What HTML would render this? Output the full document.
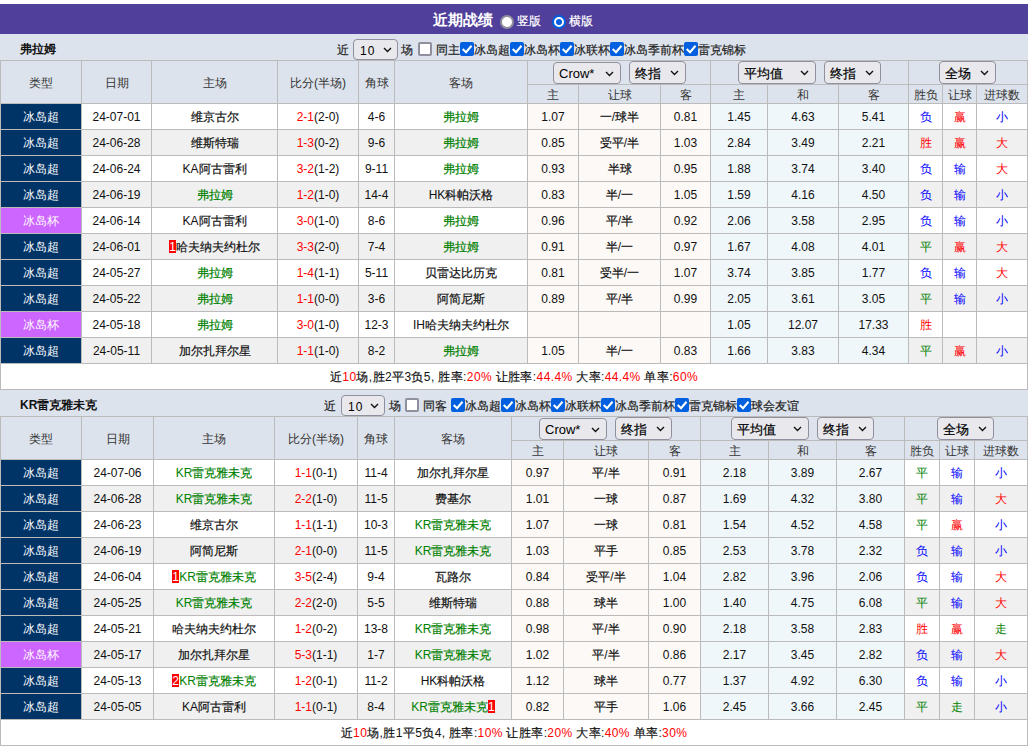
<!DOCTYPE html><html><head><meta charset="utf-8"><style>
*{margin:0;padding:0;box-sizing:content-box}
html,body{width:1033px;height:748px;overflow:hidden;background:#fff}
body{position:relative;font-family:"Liberation Sans",sans-serif;font-size:12px;color:#222;font-weight:500}
.bar{position:absolute;left:0;top:4px;width:1028px;height:30px;background:#51409b}
.sh{position:absolute;left:0;width:1028px;height:26px;background:#dde3ec}
.t{position:absolute;white-space:nowrap}
.grid{position:absolute;background:#bbbbbb}
.c{position:absolute;text-align:center;white-space:nowrap;overflow:hidden;color:#111}
.sel{position:absolute;border:1px solid #8f8f9d;border-radius:4px;background:#e9e9ed}
.chev{position:absolute}
.k{font-style:normal;-webkit-text-stroke:0.2px currentColor}
.lg .k,.nb .k,.hd .k,.rs .k{-webkit-text-stroke:0}
.hd{color:#333;font-weight:400}
.mono{font-size:12px;letter-spacing:1px}
.cbu{position:absolute;width:10px;height:10px;border:2px solid #8f8f9d;border-radius:2px;background:#fff}
.cbc{position:absolute;width:14px;height:14px;border-radius:2px;background:#0060df}
.cbc svg{position:absolute;left:0;top:0}
.rad{position:absolute;width:10px;height:10px;border:2px solid #8f8f9d;border-radius:50%;background:#fff}
.radc{position:absolute;width:6px;height:6px;border:2px solid #fff;border-radius:50%;background:#0060df;box-shadow:0 0 0 2px #0060df}
.rc{display:inline-block;background:#f00;color:#fff;width:7px;height:13px;line-height:14px;vertical-align:middle;margin-top:-2px;overflow:hidden}
</style></head><body>
<div class="bar"></div>
<div class="t" style="left:433px;top:5px;height:30px;line-height:30px;font-size:15px;font-weight:bold;color:#fff"><span class="nb"><i class="k">近期战绩</i></span></div>
<div class="rad" style="left:500px;top:15px"></div>
<div class="t" style="left:517px;top:6px;height:30px;line-height:30px;color:#fff"><i class="k">竖版</i></div>
<div class="radc" style="left:554px;top:17px"></div>
<div class="t" style="left:569px;top:6px;height:30px;line-height:30px;color:#fff"><i class="k">横版</i></div>
<div class="sh" style="top:34px"></div>
<div class="t" style="left:20px;top:36px;height:27px;line-height:27px;font-weight:bold;color:#111111"><span class="nb"><i class="k">弗拉姆</i></span></div>
<div class="t" style="left:337px;top:37px;height:26px;line-height:26px"><i class="k">近</i></div>
<div class="sel" style="left:353px;top:39px;width:43px;height:19px"></div><div class="t" style="left:360px;top:40px;height:21px;line-height:21px;font-size:13px;color:#000"><span class="mono">10</span></div><svg class="chev" style="left:383px;top:47px" width="9" height="6" viewBox="0 0 9 6"><path d="M1 1 L4.5 4.5 L8 1" fill="none" stroke="#111" stroke-width="1.35"/></svg>
<div class="t" style="left:401px;top:37px;height:26px;line-height:26px"><i class="k">场</i></div>
<div class="cbu" style="left:418px;top:42px"></div>
<div class="t" style="left:436px;top:37px;height:26px;line-height:26px"><i class="k">同主</i></div>
<div class="cbc" style="left:460px;top:42px"><svg width="14" height="14" viewBox="0 0 14 14"><path d="M2.7 7.1 L6 10.2 L11.5 3.7" fill="none" stroke="#fff" stroke-width="2.1"/></svg></div>
<div class="t" style="left:474px;top:37px;height:26px;line-height:26px"><i class="k">冰岛超</i></div>
<div class="cbc" style="left:510px;top:42px"><svg width="14" height="14" viewBox="0 0 14 14"><path d="M2.7 7.1 L6 10.2 L11.5 3.7" fill="none" stroke="#fff" stroke-width="2.1"/></svg></div>
<div class="t" style="left:524px;top:37px;height:26px;line-height:26px"><i class="k">冰岛杯</i></div>
<div class="cbc" style="left:560px;top:42px"><svg width="14" height="14" viewBox="0 0 14 14"><path d="M2.7 7.1 L6 10.2 L11.5 3.7" fill="none" stroke="#fff" stroke-width="2.1"/></svg></div>
<div class="t" style="left:574px;top:37px;height:26px;line-height:26px"><i class="k">冰联杯</i></div>
<div class="cbc" style="left:610px;top:42px"><svg width="14" height="14" viewBox="0 0 14 14"><path d="M2.7 7.1 L6 10.2 L11.5 3.7" fill="none" stroke="#fff" stroke-width="2.1"/></svg></div>
<div class="t" style="left:624px;top:37px;height:26px;line-height:26px"><i class="k">冰岛季前杯</i></div>
<div class="cbc" style="left:684px;top:42px"><svg width="14" height="14" viewBox="0 0 14 14"><path d="M2.7 7.1 L6 10.2 L11.5 3.7" fill="none" stroke="#fff" stroke-width="2.1"/></svg></div>
<div class="t" style="left:698px;top:37px;height:26px;line-height:26px"><i class="k">雷克锦标</i></div>
<div class="grid" style="left:0;top:60px;width:1028px;height:330px"></div>
<div class="c" style="left:1px;top:61px;width:80px;height:42px;line-height:44px;background:#dde3ec;"><span class="hd"><i class="k">类型</i></span></div>
<div class="c" style="left:82px;top:61px;width:69px;height:42px;line-height:44px;background:#dde3ec;"><span class="hd"><i class="k">日期</i></span></div>
<div class="c" style="left:152px;top:61px;width:125px;height:42px;line-height:44px;background:#dde3ec;"><span class="hd"><i class="k">主场</i></span></div>
<div class="c" style="left:278px;top:61px;width:80px;height:42px;line-height:44px;background:#dde3ec;"><span class="hd"><i class="k">比分</i>(<i class="k">半场</i>)</span></div>
<div class="c" style="left:359px;top:61px;width:35px;height:42px;line-height:44px;background:#dde3ec;"><span class="hd"><i class="k">角球</i></span></div>
<div class="c" style="left:395px;top:61px;width:132px;height:42px;line-height:44px;background:#dde3ec;"><span class="hd"><i class="k">客场</i></span></div>
<div class="c" style="left:528px;top:61px;width:182px;height:23px;line-height:25px;background:#dde3ec;"></div>
<div class="c" style="left:711px;top:61px;width:197px;height:23px;line-height:25px;background:#dde3ec;"></div>
<div class="c" style="left:909px;top:61px;width:118px;height:23px;line-height:25px;background:#dde3ec;"></div>
<div class="c" style="left:528px;top:85px;width:50px;height:18px;line-height:20px;background:#dde3ec;"><span class="hd"><i class="k">主</i></span></div>
<div class="c" style="left:579px;top:85px;width:81px;height:18px;line-height:20px;background:#dde3ec;"><span class="hd"><i class="k">让球</i></span></div>
<div class="c" style="left:661px;top:85px;width:49px;height:18px;line-height:20px;background:#dde3ec;"><span class="hd"><i class="k">客</i></span></div>
<div class="c" style="left:711px;top:85px;width:56px;height:18px;line-height:20px;background:#dde3ec;"><span class="hd"><i class="k">主</i></span></div>
<div class="c" style="left:768px;top:85px;width:70px;height:18px;line-height:20px;background:#dde3ec;"><span class="hd"><i class="k">和</i></span></div>
<div class="c" style="left:839px;top:85px;width:69px;height:18px;line-height:20px;background:#dde3ec;"><span class="hd"><i class="k">客</i></span></div>
<div class="c" style="left:909px;top:85px;width:33px;height:18px;line-height:20px;background:#dde3ec;"><span class="hd"><i class="k">胜负</i></span></div>
<div class="c" style="left:943px;top:85px;width:33px;height:18px;line-height:20px;background:#dde3ec;"><span class="hd"><i class="k">让球</i></span></div>
<div class="c" style="left:977px;top:85px;width:50px;height:18px;line-height:20px;background:#dde3ec;"><span class="hd"><i class="k">进球数</i></span></div>
<div class="sel" style="left:553px;top:62px;width:66px;height:20px"></div><div class="t" style="left:559px;top:63px;height:22px;line-height:22px;font-size:13px;color:#000">Crow*</div><svg class="chev" style="left:605px;top:71px" width="9" height="6" viewBox="0 0 9 6"><path d="M1 1 L4.5 4.5 L8 1" fill="none" stroke="#111" stroke-width="1.35"/></svg>
<div class="sel" style="left:629px;top:61px;width:55px;height:21px"></div><div class="t" style="left:635px;top:62px;height:23px;line-height:23px;font-size:13px;color:#000"><i class="k">终指</i></div><svg class="chev" style="left:670px;top:70px" width="9" height="6" viewBox="0 0 9 6"><path d="M1 1 L4.5 4.5 L8 1" fill="none" stroke="#111" stroke-width="1.35"/></svg>
<div class="sel" style="left:738px;top:61px;width:76px;height:21px"></div><div class="t" style="left:744px;top:62px;height:23px;line-height:23px;font-size:13px;color:#000"><i class="k">平均值</i></div><svg class="chev" style="left:800px;top:70px" width="9" height="6" viewBox="0 0 9 6"><path d="M1 1 L4.5 4.5 L8 1" fill="none" stroke="#111" stroke-width="1.35"/></svg>
<div class="sel" style="left:824px;top:61px;width:55px;height:21px"></div><div class="t" style="left:830px;top:62px;height:23px;line-height:23px;font-size:13px;color:#000"><i class="k">终指</i></div><svg class="chev" style="left:865px;top:70px" width="9" height="6" viewBox="0 0 9 6"><path d="M1 1 L4.5 4.5 L8 1" fill="none" stroke="#111" stroke-width="1.35"/></svg>
<div class="sel" style="left:939px;top:61px;width:55px;height:21px"></div><div class="t" style="left:945px;top:62px;height:23px;line-height:23px;font-size:13px;color:#000"><i class="k">全场</i></div><svg class="chev" style="left:980px;top:70px" width="9" height="6" viewBox="0 0 9 6"><path d="M1 1 L4.5 4.5 L8 1" fill="none" stroke="#111" stroke-width="1.35"/></svg>
<div class="c" style="left:1px;top:104px;width:80px;height:25px;line-height:27px;background:#003366;color:#fff"><span class="lg"><i class="k">冰岛超</i></span></div>
<div class="c" style="left:82px;top:104px;width:69px;height:25px;line-height:27px;background:#ffffff;">24-07-01</div>
<div class="c" style="left:152px;top:104px;width:125px;height:25px;line-height:27px;background:#ffffff;"><span style="color:#111111"><i class="k">维京古尔</i></span></div>
<div class="c" style="left:278px;top:104px;width:80px;height:25px;line-height:27px;background:#ffffff;"><span style="color:#ff0000">2-1</span>(2-0)</div>
<div class="c" style="left:359px;top:104px;width:35px;height:25px;line-height:27px;background:#ffffff;">4-6</div>
<div class="c" style="left:395px;top:104px;width:132px;height:25px;line-height:27px;background:#ffffff;"><span style="color:#008000"><i class="k">弗拉姆</i></span></div>
<div class="c" style="left:528px;top:104px;width:50px;height:25px;line-height:27px;background:#fdf9f6;">1.07</div>
<div class="c" style="left:579px;top:104px;width:81px;height:25px;line-height:27px;background:#fdf9f6;"><i class="k">一</i>/<i class="k">球半</i></div>
<div class="c" style="left:661px;top:104px;width:49px;height:25px;line-height:27px;background:#fdf9f6;">0.81</div>
<div class="c" style="left:711px;top:104px;width:56px;height:25px;line-height:27px;background:#eff7fb;">1.45</div>
<div class="c" style="left:768px;top:104px;width:70px;height:25px;line-height:27px;background:#eff7fb;">4.63</div>
<div class="c" style="left:839px;top:104px;width:69px;height:25px;line-height:27px;background:#eff7fb;">5.41</div>
<div class="c" style="left:909px;top:104px;width:33px;height:25px;line-height:27px;background:#ffffff;"><span class="rs" style="color:#0000ff"><i class="k">负</i></span></div>
<div class="c" style="left:943px;top:104px;width:33px;height:25px;line-height:27px;background:#ffffff;"><span class="rs" style="color:#ff0000"><i class="k">赢</i></span></div>
<div class="c" style="left:977px;top:104px;width:50px;height:25px;line-height:27px;background:#ffffff;"><span class="rs" style="color:#0000ff"><i class="k">小</i></span></div>
<div class="c" style="left:1px;top:130px;width:80px;height:25px;line-height:27px;background:#003366;color:#fff"><span class="lg"><i class="k">冰岛超</i></span></div>
<div class="c" style="left:82px;top:130px;width:69px;height:25px;line-height:27px;background:#f0f0f0;">24-06-28</div>
<div class="c" style="left:152px;top:130px;width:125px;height:25px;line-height:27px;background:#f0f0f0;"><span style="color:#111111"><i class="k">维斯特瑞</i></span></div>
<div class="c" style="left:278px;top:130px;width:80px;height:25px;line-height:27px;background:#f0f0f0;"><span style="color:#ff0000">1-3</span>(0-2)</div>
<div class="c" style="left:359px;top:130px;width:35px;height:25px;line-height:27px;background:#f0f0f0;">9-6</div>
<div class="c" style="left:395px;top:130px;width:132px;height:25px;line-height:27px;background:#f0f0f0;"><span style="color:#008000"><i class="k">弗拉姆</i></span></div>
<div class="c" style="left:528px;top:130px;width:50px;height:25px;line-height:27px;background:#fdf9f6;">0.85</div>
<div class="c" style="left:579px;top:130px;width:81px;height:25px;line-height:27px;background:#fdf9f6;"><i class="k">受平</i>/<i class="k">半</i></div>
<div class="c" style="left:661px;top:130px;width:49px;height:25px;line-height:27px;background:#fdf9f6;">1.03</div>
<div class="c" style="left:711px;top:130px;width:56px;height:25px;line-height:27px;background:#eff7fb;">2.84</div>
<div class="c" style="left:768px;top:130px;width:70px;height:25px;line-height:27px;background:#eff7fb;">3.49</div>
<div class="c" style="left:839px;top:130px;width:69px;height:25px;line-height:27px;background:#eff7fb;">2.21</div>
<div class="c" style="left:909px;top:130px;width:33px;height:25px;line-height:27px;background:#f0f0f0;"><span class="rs" style="color:#ff0000"><i class="k">胜</i></span></div>
<div class="c" style="left:943px;top:130px;width:33px;height:25px;line-height:27px;background:#f0f0f0;"><span class="rs" style="color:#ff0000"><i class="k">赢</i></span></div>
<div class="c" style="left:977px;top:130px;width:50px;height:25px;line-height:27px;background:#f0f0f0;"><span class="rs" style="color:#ff0000"><i class="k">大</i></span></div>
<div class="c" style="left:1px;top:156px;width:80px;height:25px;line-height:27px;background:#003366;color:#fff"><span class="lg"><i class="k">冰岛超</i></span></div>
<div class="c" style="left:82px;top:156px;width:69px;height:25px;line-height:27px;background:#ffffff;">24-06-24</div>
<div class="c" style="left:152px;top:156px;width:125px;height:25px;line-height:27px;background:#ffffff;"><span style="color:#111111">KA<i class="k">阿古雷利</i></span></div>
<div class="c" style="left:278px;top:156px;width:80px;height:25px;line-height:27px;background:#ffffff;"><span style="color:#ff0000">3-2</span>(1-2)</div>
<div class="c" style="left:359px;top:156px;width:35px;height:25px;line-height:27px;background:#ffffff;">9-11</div>
<div class="c" style="left:395px;top:156px;width:132px;height:25px;line-height:27px;background:#ffffff;"><span style="color:#008000"><i class="k">弗拉姆</i></span></div>
<div class="c" style="left:528px;top:156px;width:50px;height:25px;line-height:27px;background:#fdf9f6;">0.93</div>
<div class="c" style="left:579px;top:156px;width:81px;height:25px;line-height:27px;background:#fdf9f6;"><i class="k">半球</i></div>
<div class="c" style="left:661px;top:156px;width:49px;height:25px;line-height:27px;background:#fdf9f6;">0.95</div>
<div class="c" style="left:711px;top:156px;width:56px;height:25px;line-height:27px;background:#eff7fb;">1.88</div>
<div class="c" style="left:768px;top:156px;width:70px;height:25px;line-height:27px;background:#eff7fb;">3.74</div>
<div class="c" style="left:839px;top:156px;width:69px;height:25px;line-height:27px;background:#eff7fb;">3.40</div>
<div class="c" style="left:909px;top:156px;width:33px;height:25px;line-height:27px;background:#ffffff;"><span class="rs" style="color:#0000ff"><i class="k">负</i></span></div>
<div class="c" style="left:943px;top:156px;width:33px;height:25px;line-height:27px;background:#ffffff;"><span class="rs" style="color:#0000ff"><i class="k">输</i></span></div>
<div class="c" style="left:977px;top:156px;width:50px;height:25px;line-height:27px;background:#ffffff;"><span class="rs" style="color:#ff0000"><i class="k">大</i></span></div>
<div class="c" style="left:1px;top:182px;width:80px;height:25px;line-height:27px;background:#003366;color:#fff"><span class="lg"><i class="k">冰岛超</i></span></div>
<div class="c" style="left:82px;top:182px;width:69px;height:25px;line-height:27px;background:#f0f0f0;">24-06-19</div>
<div class="c" style="left:152px;top:182px;width:125px;height:25px;line-height:27px;background:#f0f0f0;"><span style="color:#008000"><i class="k">弗拉姆</i></span></div>
<div class="c" style="left:278px;top:182px;width:80px;height:25px;line-height:27px;background:#f0f0f0;"><span style="color:#ff0000">1-2</span>(1-0)</div>
<div class="c" style="left:359px;top:182px;width:35px;height:25px;line-height:27px;background:#f0f0f0;">14-4</div>
<div class="c" style="left:395px;top:182px;width:132px;height:25px;line-height:27px;background:#f0f0f0;"><span style="color:#111111">HK<i class="k">科帕沃格</i></span></div>
<div class="c" style="left:528px;top:182px;width:50px;height:25px;line-height:27px;background:#fdf9f6;">0.83</div>
<div class="c" style="left:579px;top:182px;width:81px;height:25px;line-height:27px;background:#fdf9f6;"><i class="k">半</i>/<i class="k">一</i></div>
<div class="c" style="left:661px;top:182px;width:49px;height:25px;line-height:27px;background:#fdf9f6;">1.05</div>
<div class="c" style="left:711px;top:182px;width:56px;height:25px;line-height:27px;background:#eff7fb;">1.59</div>
<div class="c" style="left:768px;top:182px;width:70px;height:25px;line-height:27px;background:#eff7fb;">4.16</div>
<div class="c" style="left:839px;top:182px;width:69px;height:25px;line-height:27px;background:#eff7fb;">4.50</div>
<div class="c" style="left:909px;top:182px;width:33px;height:25px;line-height:27px;background:#f0f0f0;"><span class="rs" style="color:#0000ff"><i class="k">负</i></span></div>
<div class="c" style="left:943px;top:182px;width:33px;height:25px;line-height:27px;background:#f0f0f0;"><span class="rs" style="color:#0000ff"><i class="k">输</i></span></div>
<div class="c" style="left:977px;top:182px;width:50px;height:25px;line-height:27px;background:#f0f0f0;"><span class="rs" style="color:#0000ff"><i class="k">小</i></span></div>
<div class="c" style="left:1px;top:208px;width:80px;height:25px;line-height:27px;background:#cc66ff;color:#fff"><span class="lg"><i class="k">冰岛杯</i></span></div>
<div class="c" style="left:82px;top:208px;width:69px;height:25px;line-height:27px;background:#ffffff;">24-06-14</div>
<div class="c" style="left:152px;top:208px;width:125px;height:25px;line-height:27px;background:#ffffff;"><span style="color:#111111">KA<i class="k">阿古雷利</i></span></div>
<div class="c" style="left:278px;top:208px;width:80px;height:25px;line-height:27px;background:#ffffff;"><span style="color:#ff0000">3-0</span>(1-0)</div>
<div class="c" style="left:359px;top:208px;width:35px;height:25px;line-height:27px;background:#ffffff;">8-6</div>
<div class="c" style="left:395px;top:208px;width:132px;height:25px;line-height:27px;background:#ffffff;"><span style="color:#008000"><i class="k">弗拉姆</i></span></div>
<div class="c" style="left:528px;top:208px;width:50px;height:25px;line-height:27px;background:#fdf9f6;">0.96</div>
<div class="c" style="left:579px;top:208px;width:81px;height:25px;line-height:27px;background:#fdf9f6;"><i class="k">平</i>/<i class="k">半</i></div>
<div class="c" style="left:661px;top:208px;width:49px;height:25px;line-height:27px;background:#fdf9f6;">0.92</div>
<div class="c" style="left:711px;top:208px;width:56px;height:25px;line-height:27px;background:#eff7fb;">2.06</div>
<div class="c" style="left:768px;top:208px;width:70px;height:25px;line-height:27px;background:#eff7fb;">3.58</div>
<div class="c" style="left:839px;top:208px;width:69px;height:25px;line-height:27px;background:#eff7fb;">2.95</div>
<div class="c" style="left:909px;top:208px;width:33px;height:25px;line-height:27px;background:#ffffff;"><span class="rs" style="color:#0000ff"><i class="k">负</i></span></div>
<div class="c" style="left:943px;top:208px;width:33px;height:25px;line-height:27px;background:#ffffff;"><span class="rs" style="color:#0000ff"><i class="k">输</i></span></div>
<div class="c" style="left:977px;top:208px;width:50px;height:25px;line-height:27px;background:#ffffff;"><span class="rs" style="color:#0000ff"><i class="k">小</i></span></div>
<div class="c" style="left:1px;top:234px;width:80px;height:25px;line-height:27px;background:#003366;color:#fff"><span class="lg"><i class="k">冰岛超</i></span></div>
<div class="c" style="left:82px;top:234px;width:69px;height:25px;line-height:27px;background:#f0f0f0;">24-06-01</div>
<div class="c" style="left:152px;top:234px;width:125px;height:25px;line-height:27px;background:#f0f0f0;"><span style="color:#111111"><span class="rc">1</span><i class="k">哈夫纳夫约杜尔</i></span></div>
<div class="c" style="left:278px;top:234px;width:80px;height:25px;line-height:27px;background:#f0f0f0;"><span style="color:#ff0000">3-3</span>(2-0)</div>
<div class="c" style="left:359px;top:234px;width:35px;height:25px;line-height:27px;background:#f0f0f0;">7-4</div>
<div class="c" style="left:395px;top:234px;width:132px;height:25px;line-height:27px;background:#f0f0f0;"><span style="color:#008000"><i class="k">弗拉姆</i></span></div>
<div class="c" style="left:528px;top:234px;width:50px;height:25px;line-height:27px;background:#fdf9f6;">0.91</div>
<div class="c" style="left:579px;top:234px;width:81px;height:25px;line-height:27px;background:#fdf9f6;"><i class="k">半</i>/<i class="k">一</i></div>
<div class="c" style="left:661px;top:234px;width:49px;height:25px;line-height:27px;background:#fdf9f6;">0.97</div>
<div class="c" style="left:711px;top:234px;width:56px;height:25px;line-height:27px;background:#eff7fb;">1.67</div>
<div class="c" style="left:768px;top:234px;width:70px;height:25px;line-height:27px;background:#eff7fb;">4.08</div>
<div class="c" style="left:839px;top:234px;width:69px;height:25px;line-height:27px;background:#eff7fb;">4.01</div>
<div class="c" style="left:909px;top:234px;width:33px;height:25px;line-height:27px;background:#f0f0f0;"><span class="rs" style="color:#008000"><i class="k">平</i></span></div>
<div class="c" style="left:943px;top:234px;width:33px;height:25px;line-height:27px;background:#f0f0f0;"><span class="rs" style="color:#ff0000"><i class="k">赢</i></span></div>
<div class="c" style="left:977px;top:234px;width:50px;height:25px;line-height:27px;background:#f0f0f0;"><span class="rs" style="color:#ff0000"><i class="k">大</i></span></div>
<div class="c" style="left:1px;top:260px;width:80px;height:25px;line-height:27px;background:#003366;color:#fff"><span class="lg"><i class="k">冰岛超</i></span></div>
<div class="c" style="left:82px;top:260px;width:69px;height:25px;line-height:27px;background:#ffffff;">24-05-27</div>
<div class="c" style="left:152px;top:260px;width:125px;height:25px;line-height:27px;background:#ffffff;"><span style="color:#008000"><i class="k">弗拉姆</i></span></div>
<div class="c" style="left:278px;top:260px;width:80px;height:25px;line-height:27px;background:#ffffff;"><span style="color:#ff0000">1-4</span>(1-1)</div>
<div class="c" style="left:359px;top:260px;width:35px;height:25px;line-height:27px;background:#ffffff;">5-11</div>
<div class="c" style="left:395px;top:260px;width:132px;height:25px;line-height:27px;background:#ffffff;"><span style="color:#111111"><i class="k">贝雷达比历克</i></span></div>
<div class="c" style="left:528px;top:260px;width:50px;height:25px;line-height:27px;background:#fdf9f6;">0.81</div>
<div class="c" style="left:579px;top:260px;width:81px;height:25px;line-height:27px;background:#fdf9f6;"><i class="k">受半</i>/<i class="k">一</i></div>
<div class="c" style="left:661px;top:260px;width:49px;height:25px;line-height:27px;background:#fdf9f6;">1.07</div>
<div class="c" style="left:711px;top:260px;width:56px;height:25px;line-height:27px;background:#eff7fb;">3.74</div>
<div class="c" style="left:768px;top:260px;width:70px;height:25px;line-height:27px;background:#eff7fb;">3.85</div>
<div class="c" style="left:839px;top:260px;width:69px;height:25px;line-height:27px;background:#eff7fb;">1.77</div>
<div class="c" style="left:909px;top:260px;width:33px;height:25px;line-height:27px;background:#ffffff;"><span class="rs" style="color:#0000ff"><i class="k">负</i></span></div>
<div class="c" style="left:943px;top:260px;width:33px;height:25px;line-height:27px;background:#ffffff;"><span class="rs" style="color:#0000ff"><i class="k">输</i></span></div>
<div class="c" style="left:977px;top:260px;width:50px;height:25px;line-height:27px;background:#ffffff;"><span class="rs" style="color:#ff0000"><i class="k">大</i></span></div>
<div class="c" style="left:1px;top:286px;width:80px;height:25px;line-height:27px;background:#003366;color:#fff"><span class="lg"><i class="k">冰岛超</i></span></div>
<div class="c" style="left:82px;top:286px;width:69px;height:25px;line-height:27px;background:#f0f0f0;">24-05-22</div>
<div class="c" style="left:152px;top:286px;width:125px;height:25px;line-height:27px;background:#f0f0f0;"><span style="color:#008000"><i class="k">弗拉姆</i></span></div>
<div class="c" style="left:278px;top:286px;width:80px;height:25px;line-height:27px;background:#f0f0f0;"><span style="color:#ff0000">1-1</span>(0-0)</div>
<div class="c" style="left:359px;top:286px;width:35px;height:25px;line-height:27px;background:#f0f0f0;">3-6</div>
<div class="c" style="left:395px;top:286px;width:132px;height:25px;line-height:27px;background:#f0f0f0;"><span style="color:#111111"><i class="k">阿简尼斯</i></span></div>
<div class="c" style="left:528px;top:286px;width:50px;height:25px;line-height:27px;background:#fdf9f6;">0.89</div>
<div class="c" style="left:579px;top:286px;width:81px;height:25px;line-height:27px;background:#fdf9f6;"><i class="k">平</i>/<i class="k">半</i></div>
<div class="c" style="left:661px;top:286px;width:49px;height:25px;line-height:27px;background:#fdf9f6;">0.99</div>
<div class="c" style="left:711px;top:286px;width:56px;height:25px;line-height:27px;background:#eff7fb;">2.05</div>
<div class="c" style="left:768px;top:286px;width:70px;height:25px;line-height:27px;background:#eff7fb;">3.61</div>
<div class="c" style="left:839px;top:286px;width:69px;height:25px;line-height:27px;background:#eff7fb;">3.05</div>
<div class="c" style="left:909px;top:286px;width:33px;height:25px;line-height:27px;background:#f0f0f0;"><span class="rs" style="color:#008000"><i class="k">平</i></span></div>
<div class="c" style="left:943px;top:286px;width:33px;height:25px;line-height:27px;background:#f0f0f0;"><span class="rs" style="color:#0000ff"><i class="k">输</i></span></div>
<div class="c" style="left:977px;top:286px;width:50px;height:25px;line-height:27px;background:#f0f0f0;"><span class="rs" style="color:#0000ff"><i class="k">小</i></span></div>
<div class="c" style="left:1px;top:312px;width:80px;height:25px;line-height:27px;background:#cc66ff;color:#fff"><span class="lg"><i class="k">冰岛杯</i></span></div>
<div class="c" style="left:82px;top:312px;width:69px;height:25px;line-height:27px;background:#ffffff;">24-05-18</div>
<div class="c" style="left:152px;top:312px;width:125px;height:25px;line-height:27px;background:#ffffff;"><span style="color:#008000"><i class="k">弗拉姆</i></span></div>
<div class="c" style="left:278px;top:312px;width:80px;height:25px;line-height:27px;background:#ffffff;"><span style="color:#ff0000">3-0</span>(1-0)</div>
<div class="c" style="left:359px;top:312px;width:35px;height:25px;line-height:27px;background:#ffffff;">12-3</div>
<div class="c" style="left:395px;top:312px;width:132px;height:25px;line-height:27px;background:#ffffff;"><span style="color:#111111">IH<i class="k">哈夫纳夫约杜尔</i></span></div>
<div class="c" style="left:528px;top:312px;width:50px;height:25px;line-height:27px;background:#fdf9f6;"></div>
<div class="c" style="left:579px;top:312px;width:81px;height:25px;line-height:27px;background:#fdf9f6;"></div>
<div class="c" style="left:661px;top:312px;width:49px;height:25px;line-height:27px;background:#fdf9f6;"></div>
<div class="c" style="left:711px;top:312px;width:56px;height:25px;line-height:27px;background:#eff7fb;">1.05</div>
<div class="c" style="left:768px;top:312px;width:70px;height:25px;line-height:27px;background:#eff7fb;">12.07</div>
<div class="c" style="left:839px;top:312px;width:69px;height:25px;line-height:27px;background:#eff7fb;">17.33</div>
<div class="c" style="left:909px;top:312px;width:33px;height:25px;line-height:27px;background:#ffffff;"><span class="rs" style="color:#ff0000"><i class="k">胜</i></span></div>
<div class="c" style="left:943px;top:312px;width:33px;height:25px;line-height:27px;background:#ffffff;"></div>
<div class="c" style="left:977px;top:312px;width:50px;height:25px;line-height:27px;background:#ffffff;"></div>
<div class="c" style="left:1px;top:338px;width:80px;height:25px;line-height:27px;background:#003366;color:#fff"><span class="lg"><i class="k">冰岛超</i></span></div>
<div class="c" style="left:82px;top:338px;width:69px;height:25px;line-height:27px;background:#f0f0f0;">24-05-11</div>
<div class="c" style="left:152px;top:338px;width:125px;height:25px;line-height:27px;background:#f0f0f0;"><span style="color:#111111"><i class="k">加尔扎拜尔星</i></span></div>
<div class="c" style="left:278px;top:338px;width:80px;height:25px;line-height:27px;background:#f0f0f0;"><span style="color:#ff0000">1-1</span>(1-0)</div>
<div class="c" style="left:359px;top:338px;width:35px;height:25px;line-height:27px;background:#f0f0f0;">8-2</div>
<div class="c" style="left:395px;top:338px;width:132px;height:25px;line-height:27px;background:#f0f0f0;"><span style="color:#008000"><i class="k">弗拉姆</i></span></div>
<div class="c" style="left:528px;top:338px;width:50px;height:25px;line-height:27px;background:#fdf9f6;">1.05</div>
<div class="c" style="left:579px;top:338px;width:81px;height:25px;line-height:27px;background:#fdf9f6;"><i class="k">半</i>/<i class="k">一</i></div>
<div class="c" style="left:661px;top:338px;width:49px;height:25px;line-height:27px;background:#fdf9f6;">0.83</div>
<div class="c" style="left:711px;top:338px;width:56px;height:25px;line-height:27px;background:#eff7fb;">1.66</div>
<div class="c" style="left:768px;top:338px;width:70px;height:25px;line-height:27px;background:#eff7fb;">3.83</div>
<div class="c" style="left:839px;top:338px;width:69px;height:25px;line-height:27px;background:#eff7fb;">4.34</div>
<div class="c" style="left:909px;top:338px;width:33px;height:25px;line-height:27px;background:#f0f0f0;"><span class="rs" style="color:#008000"><i class="k">平</i></span></div>
<div class="c" style="left:943px;top:338px;width:33px;height:25px;line-height:27px;background:#f0f0f0;"><span class="rs" style="color:#ff0000"><i class="k">赢</i></span></div>
<div class="c" style="left:977px;top:338px;width:50px;height:25px;line-height:27px;background:#f0f0f0;"><span class="rs" style="color:#0000ff"><i class="k">小</i></span></div>
<div class="c" style="left:1px;top:364px;width:1026px;height:25px;line-height:27px;background:#ffffff;letter-spacing:0.38px"><i class="k">近</i><span style="color:#ff0000">10</span><i class="k">场</i>,<i class="k">胜</i>2<i class="k">平</i>3<i class="k">负</i>5, <i class="k">胜率</i>:<span style="color:#ff0000">20%</span> <i class="k">让胜率</i>:<span style="color:#ff0000">44.4%</span> <i class="k">大率</i>:<span style="color:#ff0000">44.4%</span> <i class="k">单率</i>:<span style="color:#ff0000">60%</span></div>
<div class="sh" style="top:390px"></div>
<div class="t" style="left:20px;top:392px;height:27px;line-height:27px;font-weight:bold;color:#111111"><span class="nb">KR<i class="k">雷克雅未克</i></span></div>
<div class="t" style="left:324px;top:393px;height:26px;line-height:26px"><i class="k">近</i></div>
<div class="sel" style="left:341px;top:395px;width:42px;height:19px"></div><div class="t" style="left:348px;top:396px;height:21px;line-height:21px;font-size:13px;color:#000"><span class="mono">10</span></div><svg class="chev" style="left:370px;top:403px" width="9" height="6" viewBox="0 0 9 6"><path d="M1 1 L4.5 4.5 L8 1" fill="none" stroke="#111" stroke-width="1.35"/></svg>
<div class="t" style="left:389px;top:393px;height:26px;line-height:26px"><i class="k">场</i></div>
<div class="cbu" style="left:405px;top:398px"></div>
<div class="t" style="left:423px;top:393px;height:26px;line-height:26px"><i class="k">同客</i></div>
<div class="cbc" style="left:451px;top:398px"><svg width="14" height="14" viewBox="0 0 14 14"><path d="M2.7 7.1 L6 10.2 L11.5 3.7" fill="none" stroke="#fff" stroke-width="2.1"/></svg></div>
<div class="t" style="left:465px;top:393px;height:26px;line-height:26px"><i class="k">冰岛超</i></div>
<div class="cbc" style="left:501px;top:398px"><svg width="14" height="14" viewBox="0 0 14 14"><path d="M2.7 7.1 L6 10.2 L11.5 3.7" fill="none" stroke="#fff" stroke-width="2.1"/></svg></div>
<div class="t" style="left:515px;top:393px;height:26px;line-height:26px"><i class="k">冰岛杯</i></div>
<div class="cbc" style="left:551px;top:398px"><svg width="14" height="14" viewBox="0 0 14 14"><path d="M2.7 7.1 L6 10.2 L11.5 3.7" fill="none" stroke="#fff" stroke-width="2.1"/></svg></div>
<div class="t" style="left:565px;top:393px;height:26px;line-height:26px"><i class="k">冰联杯</i></div>
<div class="cbc" style="left:601px;top:398px"><svg width="14" height="14" viewBox="0 0 14 14"><path d="M2.7 7.1 L6 10.2 L11.5 3.7" fill="none" stroke="#fff" stroke-width="2.1"/></svg></div>
<div class="t" style="left:615px;top:393px;height:26px;line-height:26px"><i class="k">冰岛季前杯</i></div>
<div class="cbc" style="left:675px;top:398px"><svg width="14" height="14" viewBox="0 0 14 14"><path d="M2.7 7.1 L6 10.2 L11.5 3.7" fill="none" stroke="#fff" stroke-width="2.1"/></svg></div>
<div class="t" style="left:689px;top:393px;height:26px;line-height:26px"><i class="k">雷克锦标</i></div>
<div class="cbc" style="left:737px;top:398px"><svg width="14" height="14" viewBox="0 0 14 14"><path d="M2.7 7.1 L6 10.2 L11.5 3.7" fill="none" stroke="#fff" stroke-width="2.1"/></svg></div>
<div class="t" style="left:751px;top:393px;height:26px;line-height:26px"><i class="k">球会友谊</i></div>
<div class="grid" style="left:0;top:416px;width:1028px;height:330px"></div>
<div class="c" style="left:1px;top:417px;width:80px;height:42px;line-height:44px;background:#dde3ec;"><span class="hd"><i class="k">类型</i></span></div>
<div class="c" style="left:82px;top:417px;width:71px;height:42px;line-height:44px;background:#dde3ec;"><span class="hd"><i class="k">日期</i></span></div>
<div class="c" style="left:154px;top:417px;width:120px;height:42px;line-height:44px;background:#dde3ec;"><span class="hd"><i class="k">主场</i></span></div>
<div class="c" style="left:275px;top:417px;width:82px;height:42px;line-height:44px;background:#dde3ec;"><span class="hd"><i class="k">比分</i>(<i class="k">半场</i>)</span></div>
<div class="c" style="left:358px;top:417px;width:36px;height:42px;line-height:44px;background:#dde3ec;"><span class="hd"><i class="k">角球</i></span></div>
<div class="c" style="left:395px;top:417px;width:116px;height:42px;line-height:44px;background:#dde3ec;"><span class="hd"><i class="k">客场</i></span></div>
<div class="c" style="left:512px;top:417px;width:188px;height:23px;line-height:25px;background:#dde3ec;"></div>
<div class="c" style="left:701px;top:417px;width:203px;height:23px;line-height:25px;background:#dde3ec;"></div>
<div class="c" style="left:905px;top:417px;width:122px;height:23px;line-height:25px;background:#dde3ec;"></div>
<div class="c" style="left:512px;top:441px;width:51px;height:18px;line-height:20px;background:#dde3ec;"><span class="hd"><i class="k">主</i></span></div>
<div class="c" style="left:564px;top:441px;width:84px;height:18px;line-height:20px;background:#dde3ec;"><span class="hd"><i class="k">让球</i></span></div>
<div class="c" style="left:649px;top:441px;width:51px;height:18px;line-height:20px;background:#dde3ec;"><span class="hd"><i class="k">客</i></span></div>
<div class="c" style="left:701px;top:441px;width:67px;height:18px;line-height:20px;background:#dde3ec;"><span class="hd"><i class="k">主</i></span></div>
<div class="c" style="left:769px;top:441px;width:67px;height:18px;line-height:20px;background:#dde3ec;"><span class="hd"><i class="k">和</i></span></div>
<div class="c" style="left:837px;top:441px;width:67px;height:18px;line-height:20px;background:#dde3ec;"><span class="hd"><i class="k">客</i></span></div>
<div class="c" style="left:905px;top:441px;width:34px;height:18px;line-height:20px;background:#dde3ec;"><span class="hd"><i class="k">胜负</i></span></div>
<div class="c" style="left:940px;top:441px;width:34px;height:18px;line-height:20px;background:#dde3ec;"><span class="hd"><i class="k">让球</i></span></div>
<div class="c" style="left:975px;top:441px;width:52px;height:18px;line-height:20px;background:#dde3ec;"><span class="hd"><i class="k">进球数</i></span></div>
<div class="sel" style="left:539px;top:418px;width:66px;height:20px"></div><div class="t" style="left:545px;top:419px;height:22px;line-height:22px;font-size:13px;color:#000">Crow*</div><svg class="chev" style="left:591px;top:427px" width="9" height="6" viewBox="0 0 9 6"><path d="M1 1 L4.5 4.5 L8 1" fill="none" stroke="#111" stroke-width="1.35"/></svg>
<div class="sel" style="left:615px;top:417px;width:55px;height:21px"></div><div class="t" style="left:621px;top:418px;height:23px;line-height:23px;font-size:13px;color:#000"><i class="k">终指</i></div><svg class="chev" style="left:656px;top:426px" width="9" height="6" viewBox="0 0 9 6"><path d="M1 1 L4.5 4.5 L8 1" fill="none" stroke="#111" stroke-width="1.35"/></svg>
<div class="sel" style="left:731px;top:417px;width:76px;height:21px"></div><div class="t" style="left:737px;top:418px;height:23px;line-height:23px;font-size:13px;color:#000"><i class="k">平均值</i></div><svg class="chev" style="left:793px;top:426px" width="9" height="6" viewBox="0 0 9 6"><path d="M1 1 L4.5 4.5 L8 1" fill="none" stroke="#111" stroke-width="1.35"/></svg>
<div class="sel" style="left:817px;top:417px;width:55px;height:21px"></div><div class="t" style="left:823px;top:418px;height:23px;line-height:23px;font-size:13px;color:#000"><i class="k">终指</i></div><svg class="chev" style="left:858px;top:426px" width="9" height="6" viewBox="0 0 9 6"><path d="M1 1 L4.5 4.5 L8 1" fill="none" stroke="#111" stroke-width="1.35"/></svg>
<div class="sel" style="left:937px;top:417px;width:55px;height:21px"></div><div class="t" style="left:943px;top:418px;height:23px;line-height:23px;font-size:13px;color:#000"><i class="k">全场</i></div><svg class="chev" style="left:978px;top:426px" width="9" height="6" viewBox="0 0 9 6"><path d="M1 1 L4.5 4.5 L8 1" fill="none" stroke="#111" stroke-width="1.35"/></svg>
<div class="c" style="left:1px;top:460px;width:80px;height:25px;line-height:27px;background:#003366;color:#fff"><span class="lg"><i class="k">冰岛超</i></span></div>
<div class="c" style="left:82px;top:460px;width:71px;height:25px;line-height:27px;background:#ffffff;">24-07-06</div>
<div class="c" style="left:154px;top:460px;width:120px;height:25px;line-height:27px;background:#ffffff;"><span style="color:#008000">KR<i class="k">雷克雅未克</i></span></div>
<div class="c" style="left:275px;top:460px;width:82px;height:25px;line-height:27px;background:#ffffff;"><span style="color:#ff0000">1-1</span>(0-1)</div>
<div class="c" style="left:358px;top:460px;width:36px;height:25px;line-height:27px;background:#ffffff;">11-4</div>
<div class="c" style="left:395px;top:460px;width:116px;height:25px;line-height:27px;background:#ffffff;"><span style="color:#111111"><i class="k">加尔扎拜尔星</i></span></div>
<div class="c" style="left:512px;top:460px;width:51px;height:25px;line-height:27px;background:#fdf9f6;">0.97</div>
<div class="c" style="left:564px;top:460px;width:84px;height:25px;line-height:27px;background:#fdf9f6;"><i class="k">平</i>/<i class="k">半</i></div>
<div class="c" style="left:649px;top:460px;width:51px;height:25px;line-height:27px;background:#fdf9f6;">0.91</div>
<div class="c" style="left:701px;top:460px;width:67px;height:25px;line-height:27px;background:#eff7fb;">2.18</div>
<div class="c" style="left:769px;top:460px;width:67px;height:25px;line-height:27px;background:#eff7fb;">3.89</div>
<div class="c" style="left:837px;top:460px;width:67px;height:25px;line-height:27px;background:#eff7fb;">2.67</div>
<div class="c" style="left:905px;top:460px;width:34px;height:25px;line-height:27px;background:#ffffff;"><span class="rs" style="color:#008000"><i class="k">平</i></span></div>
<div class="c" style="left:940px;top:460px;width:34px;height:25px;line-height:27px;background:#ffffff;"><span class="rs" style="color:#0000ff"><i class="k">输</i></span></div>
<div class="c" style="left:975px;top:460px;width:52px;height:25px;line-height:27px;background:#ffffff;"><span class="rs" style="color:#0000ff"><i class="k">小</i></span></div>
<div class="c" style="left:1px;top:486px;width:80px;height:25px;line-height:27px;background:#003366;color:#fff"><span class="lg"><i class="k">冰岛超</i></span></div>
<div class="c" style="left:82px;top:486px;width:71px;height:25px;line-height:27px;background:#f0f0f0;">24-06-28</div>
<div class="c" style="left:154px;top:486px;width:120px;height:25px;line-height:27px;background:#f0f0f0;"><span style="color:#008000">KR<i class="k">雷克雅未克</i></span></div>
<div class="c" style="left:275px;top:486px;width:82px;height:25px;line-height:27px;background:#f0f0f0;"><span style="color:#ff0000">2-2</span>(1-0)</div>
<div class="c" style="left:358px;top:486px;width:36px;height:25px;line-height:27px;background:#f0f0f0;">11-5</div>
<div class="c" style="left:395px;top:486px;width:116px;height:25px;line-height:27px;background:#f0f0f0;"><span style="color:#111111"><i class="k">费基尔</i></span></div>
<div class="c" style="left:512px;top:486px;width:51px;height:25px;line-height:27px;background:#fdf9f6;">1.01</div>
<div class="c" style="left:564px;top:486px;width:84px;height:25px;line-height:27px;background:#fdf9f6;"><i class="k">一球</i></div>
<div class="c" style="left:649px;top:486px;width:51px;height:25px;line-height:27px;background:#fdf9f6;">0.87</div>
<div class="c" style="left:701px;top:486px;width:67px;height:25px;line-height:27px;background:#eff7fb;">1.69</div>
<div class="c" style="left:769px;top:486px;width:67px;height:25px;line-height:27px;background:#eff7fb;">4.32</div>
<div class="c" style="left:837px;top:486px;width:67px;height:25px;line-height:27px;background:#eff7fb;">3.80</div>
<div class="c" style="left:905px;top:486px;width:34px;height:25px;line-height:27px;background:#f0f0f0;"><span class="rs" style="color:#008000"><i class="k">平</i></span></div>
<div class="c" style="left:940px;top:486px;width:34px;height:25px;line-height:27px;background:#f0f0f0;"><span class="rs" style="color:#0000ff"><i class="k">输</i></span></div>
<div class="c" style="left:975px;top:486px;width:52px;height:25px;line-height:27px;background:#f0f0f0;"><span class="rs" style="color:#ff0000"><i class="k">大</i></span></div>
<div class="c" style="left:1px;top:512px;width:80px;height:25px;line-height:27px;background:#003366;color:#fff"><span class="lg"><i class="k">冰岛超</i></span></div>
<div class="c" style="left:82px;top:512px;width:71px;height:25px;line-height:27px;background:#ffffff;">24-06-23</div>
<div class="c" style="left:154px;top:512px;width:120px;height:25px;line-height:27px;background:#ffffff;"><span style="color:#111111"><i class="k">维京古尔</i></span></div>
<div class="c" style="left:275px;top:512px;width:82px;height:25px;line-height:27px;background:#ffffff;"><span style="color:#ff0000">1-1</span>(1-1)</div>
<div class="c" style="left:358px;top:512px;width:36px;height:25px;line-height:27px;background:#ffffff;">10-3</div>
<div class="c" style="left:395px;top:512px;width:116px;height:25px;line-height:27px;background:#ffffff;"><span style="color:#008000">KR<i class="k">雷克雅未克</i></span></div>
<div class="c" style="left:512px;top:512px;width:51px;height:25px;line-height:27px;background:#fdf9f6;">1.07</div>
<div class="c" style="left:564px;top:512px;width:84px;height:25px;line-height:27px;background:#fdf9f6;"><i class="k">一球</i></div>
<div class="c" style="left:649px;top:512px;width:51px;height:25px;line-height:27px;background:#fdf9f6;">0.81</div>
<div class="c" style="left:701px;top:512px;width:67px;height:25px;line-height:27px;background:#eff7fb;">1.54</div>
<div class="c" style="left:769px;top:512px;width:67px;height:25px;line-height:27px;background:#eff7fb;">4.52</div>
<div class="c" style="left:837px;top:512px;width:67px;height:25px;line-height:27px;background:#eff7fb;">4.58</div>
<div class="c" style="left:905px;top:512px;width:34px;height:25px;line-height:27px;background:#ffffff;"><span class="rs" style="color:#008000"><i class="k">平</i></span></div>
<div class="c" style="left:940px;top:512px;width:34px;height:25px;line-height:27px;background:#ffffff;"><span class="rs" style="color:#ff0000"><i class="k">赢</i></span></div>
<div class="c" style="left:975px;top:512px;width:52px;height:25px;line-height:27px;background:#ffffff;"><span class="rs" style="color:#0000ff"><i class="k">小</i></span></div>
<div class="c" style="left:1px;top:538px;width:80px;height:25px;line-height:27px;background:#003366;color:#fff"><span class="lg"><i class="k">冰岛超</i></span></div>
<div class="c" style="left:82px;top:538px;width:71px;height:25px;line-height:27px;background:#f0f0f0;">24-06-19</div>
<div class="c" style="left:154px;top:538px;width:120px;height:25px;line-height:27px;background:#f0f0f0;"><span style="color:#111111"><i class="k">阿简尼斯</i></span></div>
<div class="c" style="left:275px;top:538px;width:82px;height:25px;line-height:27px;background:#f0f0f0;"><span style="color:#ff0000">2-1</span>(0-0)</div>
<div class="c" style="left:358px;top:538px;width:36px;height:25px;line-height:27px;background:#f0f0f0;">11-5</div>
<div class="c" style="left:395px;top:538px;width:116px;height:25px;line-height:27px;background:#f0f0f0;"><span style="color:#008000">KR<i class="k">雷克雅未克</i></span></div>
<div class="c" style="left:512px;top:538px;width:51px;height:25px;line-height:27px;background:#fdf9f6;">1.03</div>
<div class="c" style="left:564px;top:538px;width:84px;height:25px;line-height:27px;background:#fdf9f6;"><i class="k">平手</i></div>
<div class="c" style="left:649px;top:538px;width:51px;height:25px;line-height:27px;background:#fdf9f6;">0.85</div>
<div class="c" style="left:701px;top:538px;width:67px;height:25px;line-height:27px;background:#eff7fb;">2.53</div>
<div class="c" style="left:769px;top:538px;width:67px;height:25px;line-height:27px;background:#eff7fb;">3.78</div>
<div class="c" style="left:837px;top:538px;width:67px;height:25px;line-height:27px;background:#eff7fb;">2.32</div>
<div class="c" style="left:905px;top:538px;width:34px;height:25px;line-height:27px;background:#f0f0f0;"><span class="rs" style="color:#0000ff"><i class="k">负</i></span></div>
<div class="c" style="left:940px;top:538px;width:34px;height:25px;line-height:27px;background:#f0f0f0;"><span class="rs" style="color:#0000ff"><i class="k">输</i></span></div>
<div class="c" style="left:975px;top:538px;width:52px;height:25px;line-height:27px;background:#f0f0f0;"><span class="rs" style="color:#0000ff"><i class="k">小</i></span></div>
<div class="c" style="left:1px;top:564px;width:80px;height:25px;line-height:27px;background:#003366;color:#fff"><span class="lg"><i class="k">冰岛超</i></span></div>
<div class="c" style="left:82px;top:564px;width:71px;height:25px;line-height:27px;background:#ffffff;">24-06-04</div>
<div class="c" style="left:154px;top:564px;width:120px;height:25px;line-height:27px;background:#ffffff;"><span style="color:#008000"><span class="rc">1</span>KR<i class="k">雷克雅未克</i></span></div>
<div class="c" style="left:275px;top:564px;width:82px;height:25px;line-height:27px;background:#ffffff;"><span style="color:#ff0000">3-5</span>(2-4)</div>
<div class="c" style="left:358px;top:564px;width:36px;height:25px;line-height:27px;background:#ffffff;">9-4</div>
<div class="c" style="left:395px;top:564px;width:116px;height:25px;line-height:27px;background:#ffffff;"><span style="color:#111111"><i class="k">瓦路尔</i></span></div>
<div class="c" style="left:512px;top:564px;width:51px;height:25px;line-height:27px;background:#fdf9f6;">0.84</div>
<div class="c" style="left:564px;top:564px;width:84px;height:25px;line-height:27px;background:#fdf9f6;"><i class="k">受平</i>/<i class="k">半</i></div>
<div class="c" style="left:649px;top:564px;width:51px;height:25px;line-height:27px;background:#fdf9f6;">1.04</div>
<div class="c" style="left:701px;top:564px;width:67px;height:25px;line-height:27px;background:#eff7fb;">2.82</div>
<div class="c" style="left:769px;top:564px;width:67px;height:25px;line-height:27px;background:#eff7fb;">3.96</div>
<div class="c" style="left:837px;top:564px;width:67px;height:25px;line-height:27px;background:#eff7fb;">2.06</div>
<div class="c" style="left:905px;top:564px;width:34px;height:25px;line-height:27px;background:#ffffff;"><span class="rs" style="color:#0000ff"><i class="k">负</i></span></div>
<div class="c" style="left:940px;top:564px;width:34px;height:25px;line-height:27px;background:#ffffff;"><span class="rs" style="color:#0000ff"><i class="k">输</i></span></div>
<div class="c" style="left:975px;top:564px;width:52px;height:25px;line-height:27px;background:#ffffff;"><span class="rs" style="color:#ff0000"><i class="k">大</i></span></div>
<div class="c" style="left:1px;top:590px;width:80px;height:25px;line-height:27px;background:#003366;color:#fff"><span class="lg"><i class="k">冰岛超</i></span></div>
<div class="c" style="left:82px;top:590px;width:71px;height:25px;line-height:27px;background:#f0f0f0;">24-05-25</div>
<div class="c" style="left:154px;top:590px;width:120px;height:25px;line-height:27px;background:#f0f0f0;"><span style="color:#008000">KR<i class="k">雷克雅未克</i></span></div>
<div class="c" style="left:275px;top:590px;width:82px;height:25px;line-height:27px;background:#f0f0f0;"><span style="color:#ff0000">2-2</span>(2-0)</div>
<div class="c" style="left:358px;top:590px;width:36px;height:25px;line-height:27px;background:#f0f0f0;">5-5</div>
<div class="c" style="left:395px;top:590px;width:116px;height:25px;line-height:27px;background:#f0f0f0;"><span style="color:#111111"><i class="k">维斯特瑞</i></span></div>
<div class="c" style="left:512px;top:590px;width:51px;height:25px;line-height:27px;background:#fdf9f6;">0.88</div>
<div class="c" style="left:564px;top:590px;width:84px;height:25px;line-height:27px;background:#fdf9f6;"><i class="k">球半</i></div>
<div class="c" style="left:649px;top:590px;width:51px;height:25px;line-height:27px;background:#fdf9f6;">1.00</div>
<div class="c" style="left:701px;top:590px;width:67px;height:25px;line-height:27px;background:#eff7fb;">1.40</div>
<div class="c" style="left:769px;top:590px;width:67px;height:25px;line-height:27px;background:#eff7fb;">4.75</div>
<div class="c" style="left:837px;top:590px;width:67px;height:25px;line-height:27px;background:#eff7fb;">6.08</div>
<div class="c" style="left:905px;top:590px;width:34px;height:25px;line-height:27px;background:#f0f0f0;"><span class="rs" style="color:#008000"><i class="k">平</i></span></div>
<div class="c" style="left:940px;top:590px;width:34px;height:25px;line-height:27px;background:#f0f0f0;"><span class="rs" style="color:#0000ff"><i class="k">输</i></span></div>
<div class="c" style="left:975px;top:590px;width:52px;height:25px;line-height:27px;background:#f0f0f0;"><span class="rs" style="color:#ff0000"><i class="k">大</i></span></div>
<div class="c" style="left:1px;top:616px;width:80px;height:25px;line-height:27px;background:#003366;color:#fff"><span class="lg"><i class="k">冰岛超</i></span></div>
<div class="c" style="left:82px;top:616px;width:71px;height:25px;line-height:27px;background:#ffffff;">24-05-21</div>
<div class="c" style="left:154px;top:616px;width:120px;height:25px;line-height:27px;background:#ffffff;"><span style="color:#111111"><i class="k">哈夫纳夫约杜尔</i></span></div>
<div class="c" style="left:275px;top:616px;width:82px;height:25px;line-height:27px;background:#ffffff;"><span style="color:#ff0000">1-2</span>(0-2)</div>
<div class="c" style="left:358px;top:616px;width:36px;height:25px;line-height:27px;background:#ffffff;">13-8</div>
<div class="c" style="left:395px;top:616px;width:116px;height:25px;line-height:27px;background:#ffffff;"><span style="color:#008000">KR<i class="k">雷克雅未克</i></span></div>
<div class="c" style="left:512px;top:616px;width:51px;height:25px;line-height:27px;background:#fdf9f6;">0.98</div>
<div class="c" style="left:564px;top:616px;width:84px;height:25px;line-height:27px;background:#fdf9f6;"><i class="k">平</i>/<i class="k">半</i></div>
<div class="c" style="left:649px;top:616px;width:51px;height:25px;line-height:27px;background:#fdf9f6;">0.90</div>
<div class="c" style="left:701px;top:616px;width:67px;height:25px;line-height:27px;background:#eff7fb;">2.18</div>
<div class="c" style="left:769px;top:616px;width:67px;height:25px;line-height:27px;background:#eff7fb;">3.58</div>
<div class="c" style="left:837px;top:616px;width:67px;height:25px;line-height:27px;background:#eff7fb;">2.83</div>
<div class="c" style="left:905px;top:616px;width:34px;height:25px;line-height:27px;background:#ffffff;"><span class="rs" style="color:#ff0000"><i class="k">胜</i></span></div>
<div class="c" style="left:940px;top:616px;width:34px;height:25px;line-height:27px;background:#ffffff;"><span class="rs" style="color:#ff0000"><i class="k">赢</i></span></div>
<div class="c" style="left:975px;top:616px;width:52px;height:25px;line-height:27px;background:#ffffff;"><span class="rs" style="color:#008000"><i class="k">走</i></span></div>
<div class="c" style="left:1px;top:642px;width:80px;height:25px;line-height:27px;background:#cc66ff;color:#fff"><span class="lg"><i class="k">冰岛杯</i></span></div>
<div class="c" style="left:82px;top:642px;width:71px;height:25px;line-height:27px;background:#f0f0f0;">24-05-17</div>
<div class="c" style="left:154px;top:642px;width:120px;height:25px;line-height:27px;background:#f0f0f0;"><span style="color:#111111"><i class="k">加尔扎拜尔星</i></span></div>
<div class="c" style="left:275px;top:642px;width:82px;height:25px;line-height:27px;background:#f0f0f0;"><span style="color:#ff0000">5-3</span>(1-1)</div>
<div class="c" style="left:358px;top:642px;width:36px;height:25px;line-height:27px;background:#f0f0f0;">1-7</div>
<div class="c" style="left:395px;top:642px;width:116px;height:25px;line-height:27px;background:#f0f0f0;"><span style="color:#008000">KR<i class="k">雷克雅未克</i></span></div>
<div class="c" style="left:512px;top:642px;width:51px;height:25px;line-height:27px;background:#fdf9f6;">1.02</div>
<div class="c" style="left:564px;top:642px;width:84px;height:25px;line-height:27px;background:#fdf9f6;"><i class="k">平</i>/<i class="k">半</i></div>
<div class="c" style="left:649px;top:642px;width:51px;height:25px;line-height:27px;background:#fdf9f6;">0.86</div>
<div class="c" style="left:701px;top:642px;width:67px;height:25px;line-height:27px;background:#eff7fb;">2.17</div>
<div class="c" style="left:769px;top:642px;width:67px;height:25px;line-height:27px;background:#eff7fb;">3.45</div>
<div class="c" style="left:837px;top:642px;width:67px;height:25px;line-height:27px;background:#eff7fb;">2.82</div>
<div class="c" style="left:905px;top:642px;width:34px;height:25px;line-height:27px;background:#f0f0f0;"><span class="rs" style="color:#0000ff"><i class="k">负</i></span></div>
<div class="c" style="left:940px;top:642px;width:34px;height:25px;line-height:27px;background:#f0f0f0;"><span class="rs" style="color:#0000ff"><i class="k">输</i></span></div>
<div class="c" style="left:975px;top:642px;width:52px;height:25px;line-height:27px;background:#f0f0f0;"><span class="rs" style="color:#ff0000"><i class="k">大</i></span></div>
<div class="c" style="left:1px;top:668px;width:80px;height:25px;line-height:27px;background:#003366;color:#fff"><span class="lg"><i class="k">冰岛超</i></span></div>
<div class="c" style="left:82px;top:668px;width:71px;height:25px;line-height:27px;background:#ffffff;">24-05-13</div>
<div class="c" style="left:154px;top:668px;width:120px;height:25px;line-height:27px;background:#ffffff;"><span style="color:#008000"><span class="rc">2</span>KR<i class="k">雷克雅未克</i></span></div>
<div class="c" style="left:275px;top:668px;width:82px;height:25px;line-height:27px;background:#ffffff;"><span style="color:#ff0000">1-2</span>(0-1)</div>
<div class="c" style="left:358px;top:668px;width:36px;height:25px;line-height:27px;background:#ffffff;">11-2</div>
<div class="c" style="left:395px;top:668px;width:116px;height:25px;line-height:27px;background:#ffffff;"><span style="color:#111111">HK<i class="k">科帕沃格</i></span></div>
<div class="c" style="left:512px;top:668px;width:51px;height:25px;line-height:27px;background:#fdf9f6;">1.12</div>
<div class="c" style="left:564px;top:668px;width:84px;height:25px;line-height:27px;background:#fdf9f6;"><i class="k">球半</i></div>
<div class="c" style="left:649px;top:668px;width:51px;height:25px;line-height:27px;background:#fdf9f6;">0.77</div>
<div class="c" style="left:701px;top:668px;width:67px;height:25px;line-height:27px;background:#eff7fb;">1.37</div>
<div class="c" style="left:769px;top:668px;width:67px;height:25px;line-height:27px;background:#eff7fb;">4.92</div>
<div class="c" style="left:837px;top:668px;width:67px;height:25px;line-height:27px;background:#eff7fb;">6.30</div>
<div class="c" style="left:905px;top:668px;width:34px;height:25px;line-height:27px;background:#ffffff;"><span class="rs" style="color:#0000ff"><i class="k">负</i></span></div>
<div class="c" style="left:940px;top:668px;width:34px;height:25px;line-height:27px;background:#ffffff;"><span class="rs" style="color:#0000ff"><i class="k">输</i></span></div>
<div class="c" style="left:975px;top:668px;width:52px;height:25px;line-height:27px;background:#ffffff;"><span class="rs" style="color:#0000ff"><i class="k">小</i></span></div>
<div class="c" style="left:1px;top:694px;width:80px;height:25px;line-height:27px;background:#003366;color:#fff"><span class="lg"><i class="k">冰岛超</i></span></div>
<div class="c" style="left:82px;top:694px;width:71px;height:25px;line-height:27px;background:#f0f0f0;">24-05-05</div>
<div class="c" style="left:154px;top:694px;width:120px;height:25px;line-height:27px;background:#f0f0f0;"><span style="color:#111111">KA<i class="k">阿古雷利</i></span></div>
<div class="c" style="left:275px;top:694px;width:82px;height:25px;line-height:27px;background:#f0f0f0;"><span style="color:#ff0000">1-1</span>(0-1)</div>
<div class="c" style="left:358px;top:694px;width:36px;height:25px;line-height:27px;background:#f0f0f0;">8-4</div>
<div class="c" style="left:395px;top:694px;width:116px;height:25px;line-height:27px;background:#f0f0f0;"><span style="color:#008000">KR<i class="k">雷克雅未克</i><span class="rc">1</span></span></div>
<div class="c" style="left:512px;top:694px;width:51px;height:25px;line-height:27px;background:#fdf9f6;">0.82</div>
<div class="c" style="left:564px;top:694px;width:84px;height:25px;line-height:27px;background:#fdf9f6;"><i class="k">平手</i></div>
<div class="c" style="left:649px;top:694px;width:51px;height:25px;line-height:27px;background:#fdf9f6;">1.06</div>
<div class="c" style="left:701px;top:694px;width:67px;height:25px;line-height:27px;background:#eff7fb;">2.45</div>
<div class="c" style="left:769px;top:694px;width:67px;height:25px;line-height:27px;background:#eff7fb;">3.66</div>
<div class="c" style="left:837px;top:694px;width:67px;height:25px;line-height:27px;background:#eff7fb;">2.45</div>
<div class="c" style="left:905px;top:694px;width:34px;height:25px;line-height:27px;background:#f0f0f0;"><span class="rs" style="color:#008000"><i class="k">平</i></span></div>
<div class="c" style="left:940px;top:694px;width:34px;height:25px;line-height:27px;background:#f0f0f0;"><span class="rs" style="color:#008000"><i class="k">走</i></span></div>
<div class="c" style="left:975px;top:694px;width:52px;height:25px;line-height:27px;background:#f0f0f0;"><span class="rs" style="color:#0000ff"><i class="k">小</i></span></div>
<div class="c" style="left:1px;top:720px;width:1026px;height:25px;line-height:27px;background:#ffffff;letter-spacing:0.38px"><i class="k">近</i><span style="color:#ff0000">10</span><i class="k">场</i>,<i class="k">胜</i>1<i class="k">平</i>5<i class="k">负</i>4, <i class="k">胜率</i>:<span style="color:#ff0000">10%</span> <i class="k">让胜率</i>:<span style="color:#ff0000">20%</span> <i class="k">大率</i>:<span style="color:#ff0000">40%</span> <i class="k">单率</i>:<span style="color:#ff0000">30%</span></div>
</body></html>
